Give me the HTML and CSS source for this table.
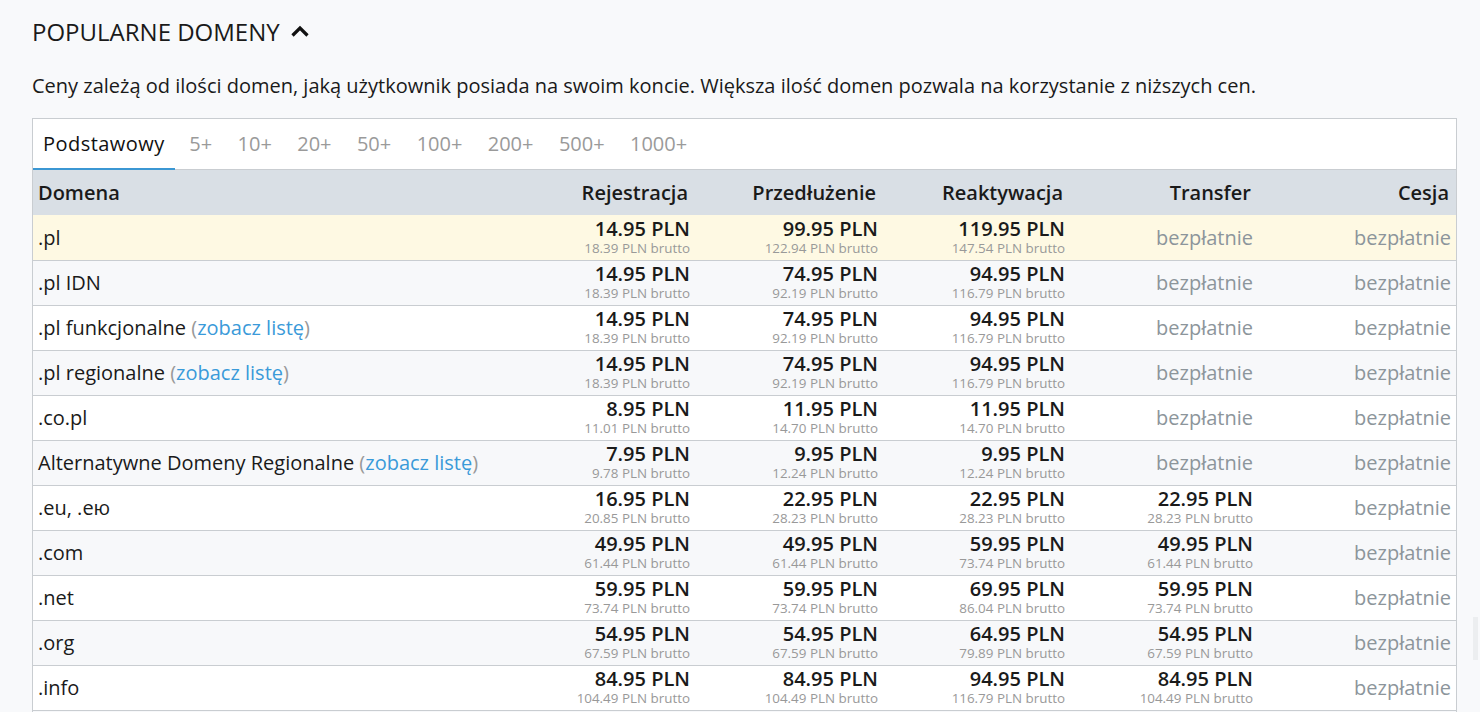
FILE: index.html
```html
<!DOCTYPE html>
<html lang="pl">
<head>
<meta charset="utf-8">
<title>Popularne domeny</title>
<link rel="stylesheet" href="styles.css">
</head>
<body>
<section class="section">
  <h2 class="title">POPULARNE DOMENY
    <svg class="chev" width="20" height="14" viewBox="0 0 20 14"><path d="M2.5 11.5 L10 4 L17.5 11.5" fill="none" stroke="#111" stroke-width="3.2"/></svg>
  </h2>
  <p class="desc">Ceny zależą od ilości domen, jaką użytkownik posiada na swoim koncie. Większa ilość domen pozwala na korzystanie z niższych cen.</p>
  <div class="box">
    <nav class="tabs">
      <span class="tab active">Podstawowy</span>
      <span class="tab">5+</span>
      <span class="tab">10+</span>
      <span class="tab">20+</span>
      <span class="tab">50+</span>
      <span class="tab">100+</span>
      <span class="tab">200+</span>
      <span class="tab">500+</span>
      <span class="tab">1000+</span>
    </nav>
    <table class="prices">
      <colgroup>
        <col>
        <col class="c188">
        <col class="c188">
        <col class="c187">
        <col class="c188">
        <col class="c198">
      </colgroup>
      <thead>
        <tr><th class="dom">Domena</th><th>Rejestracja</th><th>Przedłużenie</th><th>Reaktywacja</th><th>Transfer</th><th>Cesja</th></tr>
      </thead>
      <tbody>
        <tr class="hl">
          <td class="dom">.pl</td>
          <td><b>14.95 PLN</b><small>18.39 PLN brutto</small></td>
          <td><b>99.95 PLN</b><small>122.94 PLN brutto</small></td>
          <td><b>119.95 PLN</b><small>147.54 PLN brutto</small></td>
          <td class="free">bezpłatnie</td>
          <td class="free">bezpłatnie</td>
        </tr>
        <tr>
          <td class="dom">.pl IDN</td>
          <td><b>14.95 PLN</b><small>18.39 PLN brutto</small></td>
          <td><b>74.95 PLN</b><small>92.19 PLN brutto</small></td>
          <td><b>94.95 PLN</b><small>116.79 PLN brutto</small></td>
          <td class="free">bezpłatnie</td>
          <td class="free">bezpłatnie</td>
        </tr>
        <tr>
          <td class="dom">.pl funkcjonalne <span class="par">(<a href="#">zobacz listę</a>)</span></td>
          <td><b>14.95 PLN</b><small>18.39 PLN brutto</small></td>
          <td><b>74.95 PLN</b><small>92.19 PLN brutto</small></td>
          <td><b>94.95 PLN</b><small>116.79 PLN brutto</small></td>
          <td class="free">bezpłatnie</td>
          <td class="free">bezpłatnie</td>
        </tr>
        <tr>
          <td class="dom">.pl regionalne <span class="par">(<a href="#">zobacz listę</a>)</span></td>
          <td><b>14.95 PLN</b><small>18.39 PLN brutto</small></td>
          <td><b>74.95 PLN</b><small>92.19 PLN brutto</small></td>
          <td><b>94.95 PLN</b><small>116.79 PLN brutto</small></td>
          <td class="free">bezpłatnie</td>
          <td class="free">bezpłatnie</td>
        </tr>
        <tr>
          <td class="dom">.co.pl</td>
          <td><b>8.95 PLN</b><small>11.01 PLN brutto</small></td>
          <td><b>11.95 PLN</b><small>14.70 PLN brutto</small></td>
          <td><b>11.95 PLN</b><small>14.70 PLN brutto</small></td>
          <td class="free">bezpłatnie</td>
          <td class="free">bezpłatnie</td>
        </tr>
        <tr>
          <td class="dom">Alternatywne Domeny Regionalne <span class="par">(<a href="#">zobacz listę</a>)</span></td>
          <td><b>7.95 PLN</b><small>9.78 PLN brutto</small></td>
          <td><b>9.95 PLN</b><small>12.24 PLN brutto</small></td>
          <td><b>9.95 PLN</b><small>12.24 PLN brutto</small></td>
          <td class="free">bezpłatnie</td>
          <td class="free">bezpłatnie</td>
        </tr>
        <tr>
          <td class="dom">.eu, .ею</td>
          <td><b>16.95 PLN</b><small>20.85 PLN brutto</small></td>
          <td><b>22.95 PLN</b><small>28.23 PLN brutto</small></td>
          <td><b>22.95 PLN</b><small>28.23 PLN brutto</small></td>
          <td><b>22.95 PLN</b><small>28.23 PLN brutto</small></td>
          <td class="free">bezpłatnie</td>
        </tr>
        <tr>
          <td class="dom">.com</td>
          <td><b>49.95 PLN</b><small>61.44 PLN brutto</small></td>
          <td><b>49.95 PLN</b><small>61.44 PLN brutto</small></td>
          <td><b>59.95 PLN</b><small>73.74 PLN brutto</small></td>
          <td><b>49.95 PLN</b><small>61.44 PLN brutto</small></td>
          <td class="free">bezpłatnie</td>
        </tr>
        <tr>
          <td class="dom">.net</td>
          <td><b>59.95 PLN</b><small>73.74 PLN brutto</small></td>
          <td><b>59.95 PLN</b><small>73.74 PLN brutto</small></td>
          <td><b>69.95 PLN</b><small>86.04 PLN brutto</small></td>
          <td><b>59.95 PLN</b><small>73.74 PLN brutto</small></td>
          <td class="free">bezpłatnie</td>
        </tr>
        <tr>
          <td class="dom">.org</td>
          <td><b>54.95 PLN</b><small>67.59 PLN brutto</small></td>
          <td><b>54.95 PLN</b><small>67.59 PLN brutto</small></td>
          <td><b>64.95 PLN</b><small>79.89 PLN brutto</small></td>
          <td><b>54.95 PLN</b><small>67.59 PLN brutto</small></td>
          <td class="free">bezpłatnie</td>
        </tr>
        <tr>
          <td class="dom">.info</td>
          <td><b>84.95 PLN</b><small>104.49 PLN brutto</small></td>
          <td><b>84.95 PLN</b><small>104.49 PLN brutto</small></td>
          <td><b>94.95 PLN</b><small>116.79 PLN brutto</small></td>
          <td><b>84.95 PLN</b><small>104.49 PLN brutto</small></td>
          <td class="free">bezpłatnie</td>
        </tr>
        <tr>
          <td class="dom">.biz</td>
          <td><b>69.95 PLN</b><small>86.04 PLN brutto</small></td>
          <td><b>69.95 PLN</b><small>86.04 PLN brutto</small></td>
          <td><b>79.95 PLN</b><small>98.34 PLN brutto</small></td>
          <td><b>69.95 PLN</b><small>86.04 PLN brutto</small></td>
          <td class="free">bezpłatnie</td>
        </tr>
      </tbody>
    </table>
  </div>
</section>
<div class="scroll-thumb"></div>
</body>
</html>
```
FILE: styles.css
```css
html, body {
  margin: 0;
  padding: 0;
  background: #f8f9fb;
  font-family: "Open Sans", "Noto Sans", sans-serif;
  color: #1a1a1a;
  overflow: hidden;
  height: 712px;
}
.section {
  padding: 16px 23px 0 32px;
}
.title {
  margin: 0;
  font-size: 24px;
  font-weight: 500;
  line-height: 32px;
  display: flex;
  align-items: center;
  gap: 10px;
}
.chev { display: block; margin-top: -3px; }
.desc {
  margin: 24px 0 0;
  font-size: 20px;
  line-height: 28px;
}
.box {
  margin-top: 18px;
  border: 1px solid #c9cdd1;
  background: #fff;
}
.tabs {
  display: flex;
  height: 50px;
  border-bottom: 1px solid #c9cdd1;
  align-items: stretch;
}
.tab {
  padding: 0 12.7px;
  display: flex;
  align-items: center;
  font-size: 20px;
  color: #9a9a9a;
  border-bottom: 2px solid transparent;
  margin-bottom: -1px;
}
.tab.active {
  padding: 0 10px;
  margin-right: 2px;
  color: #111;
  font-weight: 500;
  letter-spacing: 0.45px;
  border-bottom-color: #3b97d3;
}
.prices {
  width: 100%;
  border-collapse: collapse;
  table-layout: fixed;
}
.c188 { width: 188px; }
.c187 { width: 187px; }
.c198 { width: 198px; }
.prices th {
  background: #d9dfe5;
  height: 45px;
  padding: 0 7px 0 5px;
  text-align: right;
  font-size: 20px;
  font-weight: 600;
  box-sizing: border-box;
}
.prices th.dom { text-align: left; }
.prices td {
  height: 45px;
  padding: 0 5px;
  text-align: right;
  vertical-align: middle;
  border-top: 1px solid #c9cdd1;
  box-sizing: border-box;
}
.prices tbody tr:nth-child(even) { background: #f7f8fa; }
.prices tbody tr.hl { background: #fef9e3; }
.prices tbody tr.hl td { border-top: none; height: 45px; }
.prices td.dom {
  text-align: left;
  font-size: 20px;
  white-space: nowrap;
}
.prices td b {
  display: block;
  font-weight: 600;
  font-size: 20px;
  line-height: 20px;
}
.prices td small {
  display: block;
  margin-top: 2px;
  font-size: 13.4px;
  line-height: 15px;
  color: #999;
}
.prices td.free {
  color: #8c959b;
  font-size: 20px;
}
.par { color: #999; }
.par a { color: #3a9ad9; text-decoration: none; }
.scroll-thumb {
  position: fixed;
  right: 2px;
  top: 617px;
  width: 5px;
  height: 43px;
  background: #eceef0;
}
```
